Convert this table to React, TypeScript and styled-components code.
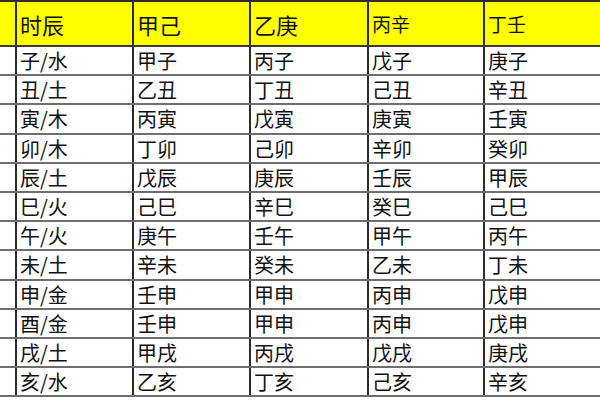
import React from "react";
import styled, { createGlobalStyle } from "styled-components";

const GlobalStyle = createGlobalStyle`
  html, body {
    margin: 0;
    padding: 0;
    background: #ffffff;
    overflow: hidden;
  }
`;

const header = ["", "时辰", "甲己", "乙庚", "丙辛", "丁壬"];
// header cells that are drawn in a smaller size in the source sheet
const smallHeader = [false, false, false, false, true, true];

const rows: string[][] = [
  ["子/水", "甲子", "丙子", "戊子", "庚子"],
  ["丑/土", "乙丑", "丁丑", "己丑", "辛丑"],
  ["寅/木", "丙寅", "戊寅", "庚寅", "壬寅"],
  ["卯/木", "丁卯", "己卯", "辛卯", "癸卯"],
  ["辰/土", "戊辰", "庚辰", "壬辰", "甲辰"],
  ["巳/火", "己巳", "辛巳", "癸巳", "己巳"],
  ["午/火", "庚午", "壬午", "甲午", "丙午"],
  ["未/土", "辛未", "癸未", "乙未", "丁未"],
  ["申/金", "壬申", "甲申", "丙申", "戊申"],
  ["酉/金", "壬申", "甲申", "丙申", "戊申"],
  ["戌/土", "甲戌", "丙戌", "戊戌", "庚戌"],
  ["亥/水", "乙亥", "丁亥", "己亥", "辛亥"],
];

const colWidths = [16, 117, 117, 118, 116, 116];

const Sheet = styled.table`
  width: 600px;
  table-layout: fixed;
  border-collapse: collapse;
  font-family: "Noto Sans CJK SC", "Noto Sans", sans-serif;
  color: #111111;
  border-top: 2px solid #2b2b2b;
`;

const HeadRow = styled.tr`
  height: 45px;
  background: #ffff00;
`;

const HeadCell = styled.th<{ $small?: boolean }>`
  padding: 0 0 0 3px;
  text-align: left;
  font-weight: 400;
  font-size: ${(p) => (p.$small ? "19px" : "22px")};
  line-height: 1;
  border-left: 2px solid #2b2b2b;
  border-bottom: 2px solid #3a3a3a;
  &:first-child {
    border-left: none;
  }
`;

const BodyRow = styled.tr`
  height: 29.2px;
  background: #ffffff;
`;

const Cell = styled.td`
  padding: 1px 0 0 3px;
  font-size: 20px;
  line-height: 1;
  white-space: nowrap;
  overflow: hidden;
  border-left: 2px solid #2b2b2b;
  border-bottom: 2px solid #6e6e6e;
  &:first-child {
    border-left: none;
  }
`;

export default function App() {
  return (
    <>
      <GlobalStyle />
      <Sheet>
        <colgroup>
          {colWidths.map((w, i) => (
            <col key={i} style={{ width: w }} />
          ))}
        </colgroup>
        <thead>
          <HeadRow>
            {header.map((h, i) => (
              <HeadCell key={i} $small={smallHeader[i]}>
                {h}
              </HeadCell>
            ))}
          </HeadRow>
        </thead>
        <tbody>
          {rows.map((r, i) => (
            <BodyRow key={i}>
              <Cell />
              {r.map((c, j) => (
                <Cell key={j}>{c}</Cell>
              ))}
            </BodyRow>
          ))}
        </tbody>
      </Sheet>
    </>
  );
}
